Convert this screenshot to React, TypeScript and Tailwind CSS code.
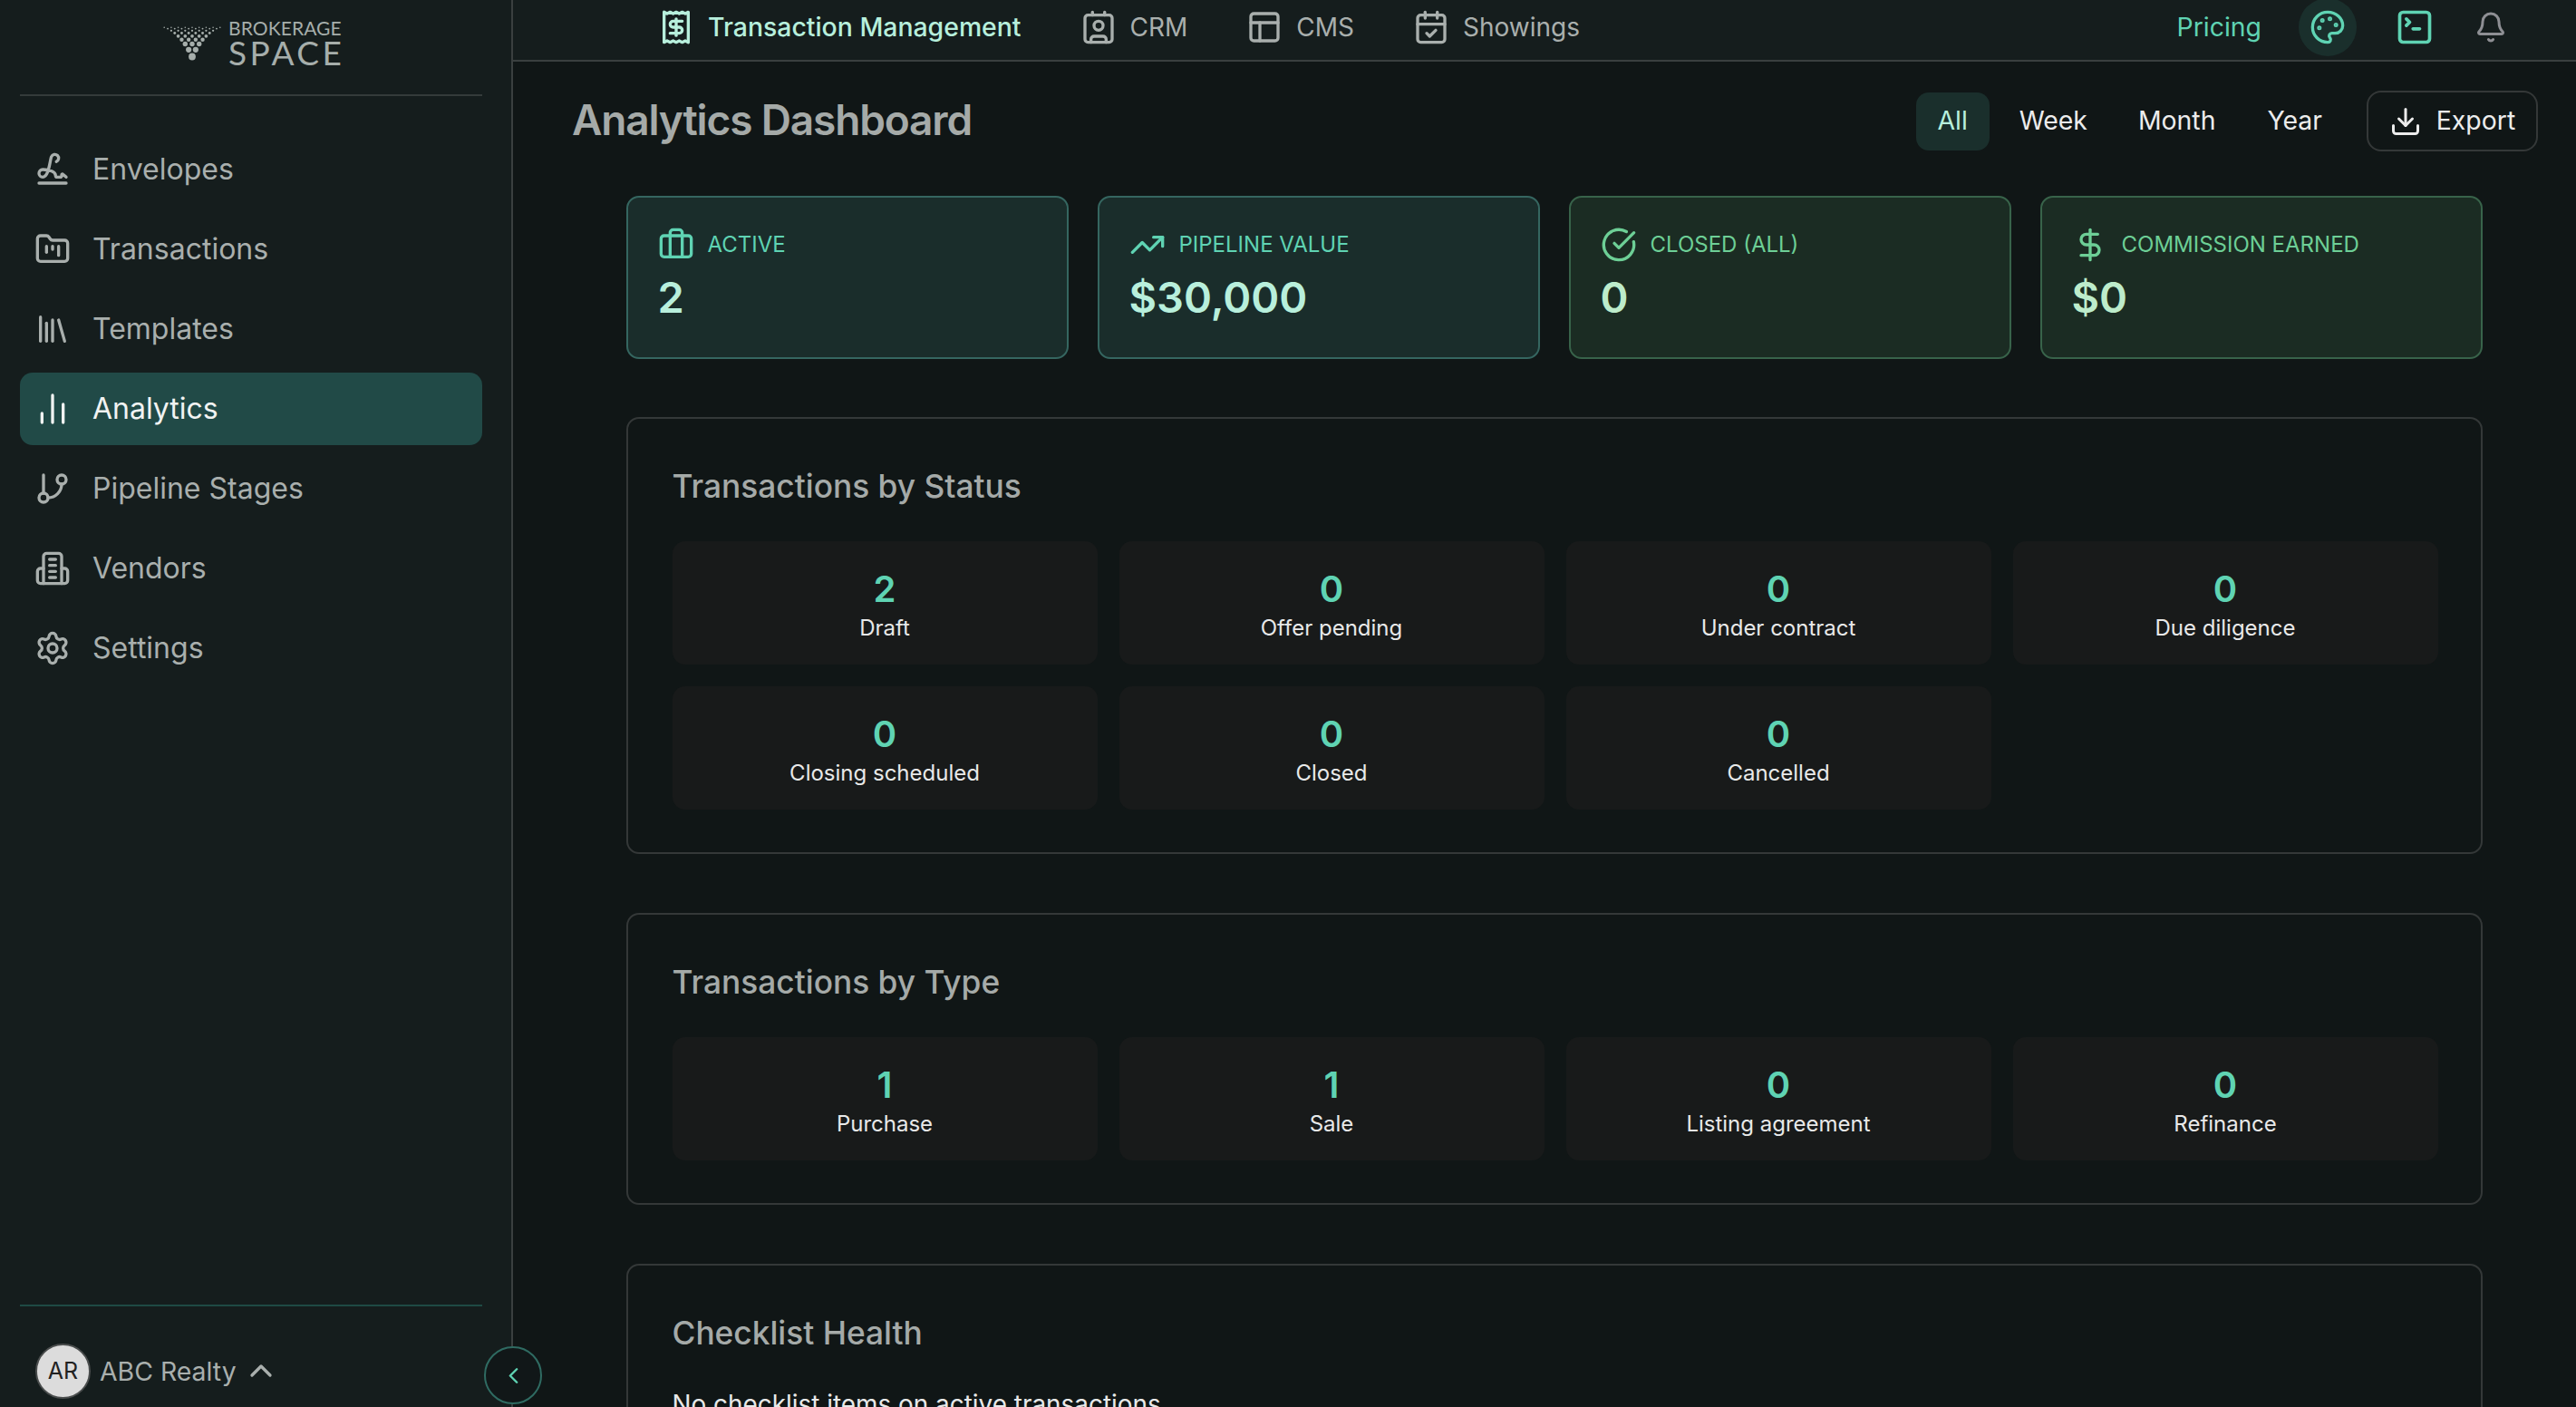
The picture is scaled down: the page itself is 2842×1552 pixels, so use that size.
import {
  Bell,
  Briefcase,
  CalendarCheck,
  ChartNoAxesColumn,
  ChevronLeft,
  ChevronUp,
  CircleCheckBig,
  Contact,
  DollarSign,
  Download,
  FolderKanban,
  GitBranch,
  Library,
  Palette,
  PanelsTopLeft,
  Receipt,
  Settings,
  Signature,
  SquareTerminal,
  TrendingUp,
  type LucideIcon
} from "lucide-react";

function VendorsIcon({size = 40}: {size?: number}) {
  return (
    <svg
      width={size}
      height={size}
      viewBox="0 0 24 24"
      fill="none"
      stroke="currentColor"
      strokeWidth={2}
      strokeLinecap="round"
      strokeLinejoin="round"
    >
      <path d="M6 22V4a2 2 0 0 1 2-2h8a2 2 0 0 1 2 2v18Z" />
      <path d="M6 12H4a2 2 0 0 0-2 2v6a2 2 0 0 0 2 2h2" />
      <path d="M18 12h2a2 2 0 0 1 2 2v6a2 2 0 0 1-2 2h-2" />
      <path d="M10 6h4" />
      <path d="M10 10h4" />
      <path d="M10 14h4" />
      <path d="M10 18h4" />
    </svg>
  );
}

// funnel of dots in the logo: triangular lattice, wide top row down to one big dot
const logoRows = [
  {y: 6.3, count: 9, r: 0.8},
  {y: 7.6, count: 8, r: 0.95},
  {y: 9.8, count: 7, r: 1.15},
  {y: 12.5, count: 6, r: 1.45},
  {y: 15.8, count: 5, r: 1.85},
  {y: 19.8, count: 4, r: 2.2},
  {y: 24.5, count: 3, r: 2.7},
  {y: 30.8, count: 2, r: 3.1},
  {y: 38.5, count: 1, r: 3.9}
];

function LogoMark() {
  return (
    <svg width="74" height="48" viewBox="0 0 74 48" fill="#a6aeab">
      {logoRows.flatMap((row) =>
        Array.from({length: row.count}, (_, index) => (
          <circle
            key={`${row.y}-${index}`}
            cx={36 + (index - (row.count - 1) / 2) * 7.7}
            cy={row.y}
            r={row.r}
          />
        ))
      )}
    </svg>
  );
}

type NavItem = {label: string; icon: LucideIcon | typeof VendorsIcon; active?: boolean};

const navItems: NavItem[] = [
  {label: "Envelopes", icon: Signature},
  {label: "Transactions", icon: FolderKanban},
  {label: "Templates", icon: Library},
  {label: "Analytics", icon: ChartNoAxesColumn, active: true},
  {label: "Pipeline Stages", icon: GitBranch},
  {label: "Vendors", icon: VendorsIcon},
  {label: "Settings", icon: Settings}
];

const topLinks = [
  {label: "CRM", icon: Contact},
  {label: "CMS", icon: PanelsTopLeft},
  {label: "Showings", icon: CalendarCheck}
];

const summaryCards = [
  {label: "Active", value: "2", icon: Briefcase, tone: "teal"},
  {label: "Pipeline Value", value: "$30,000", icon: TrendingUp, tone: "teal"},
  {label: "Closed (All)", value: "0", icon: CircleCheckBig, tone: "green"},
  {label: "Commission Earned", value: "$0", icon: DollarSign, tone: "green"}
];

const statusStats = [
  {label: "Draft", value: 2},
  {label: "Offer pending", value: 0},
  {label: "Under contract", value: 0},
  {label: "Due diligence", value: 0},
  {label: "Closing scheduled", value: 0},
  {label: "Closed", value: 0},
  {label: "Cancelled", value: 0}
];

const typeStats = [
  {label: "Purchase", value: 1},
  {label: "Sale", value: 1},
  {label: "Listing agreement", value: 0},
  {label: "Refinance", value: 0}
];

function Sidebar() {
  return (
    <aside className="relative flex h-full w-[566px] shrink-0 flex-col border-r-2 border-[#3a3f3f] bg-[#151d1d]">
      <div className="ml-[22px] mr-[32px] flex h-[106px] shrink-0 items-start justify-center gap-[2px] border-b-2 border-[#343b3a]">
        <div className="mt-[24px]">
          <LogoMark />
        </div>
        <div className="mt-[22px] flex w-[126px] flex-col text-[#a6aeab] font-['Lato',sans-serif]">
          <span className="text-[21px] leading-[18px] tracking-[0.1px]">BROKERAGE</span>
          <span className="mt-[5px] text-[37px] leading-[26px] tracking-[3.5px]">SPACE</span>
        </div>
      </div>

      <nav className="ml-[22px] mr-[32px] mt-[41px] flex flex-col gap-[8px]">
        {navItems.map((item) => {
          const Icon = item.icon;
          return (
            <div
              key={item.label}
              className={
                item.active
                  ? "flex h-[80px] items-center gap-[24px] rounded-[14px] bg-[#214a47] pl-[16px] text-[#f1f3f2]"
                  : "flex h-[80px] items-center gap-[24px] rounded-[14px] pl-[16px] text-[#a9afad]"
              }
            >
              <Icon size={40} />
              <span className="text-[32px] leading-none">{item.label}</span>
            </div>
          );
        })}
      </nav>

      <div className="ml-[22px] mr-[32px] mt-auto flex h-[113px] shrink-0 items-start border-t-2 border-[#1f4a44] pl-[17px] pt-[41px]">
        <div className="flex h-[61px] w-[61px] items-center justify-center rounded-full border-2 border-[#4a4d4d] bg-[#dcdcdc] text-[25px] text-[#222222]">
          AR
        </div>
        <span className="ml-[10px] mt-[13px] text-[28.4px] leading-[35px] text-[#a9afad]">ABC Realty</span>
        <ChevronUp size={40} className="ml-[7px] mt-[10px] text-[#a9afad]" />
      </div>

      <button className="absolute bottom-[3px] right-[-34px] flex h-[64px] w-[64px] items-center justify-center rounded-full border-2 border-[#2f6b62] bg-[#111718] text-[#5fd3b3]">
        <ChevronLeft size={29} />
      </button>
    </aside>
  );
}

function TopBar() {
  return (
    <header className="flex h-[68px] shrink-0 items-center justify-between border-b-2 border-[#3a3f3f] bg-[#151d1d] pb-[6px] pl-[160px] pr-[62px]">
      <div className="flex items-center gap-[65px]">
        <div className="flex items-center gap-[15px] text-[#b7efdc]">
          <Receipt size={40} />
          <span className="text-[28.4px] font-medium leading-none">Transaction Management</span>
        </div>
        {topLinks.map((link) => {
          const Icon = link.icon;
          return (
            <div key={link.label} className="flex items-center gap-[15px] text-[#a9afad]">
              <Icon size={40} />
              <span className="text-[28px] leading-none">{link.label}</span>
            </div>
          );
        })}
      </div>
      <div className="flex items-center">
        <span className="text-[28.4px] leading-none text-[#5fd3b3]">Pricing</span>
        <div className="ml-[41px] flex h-[64px] w-[64px] items-center justify-center rounded-full bg-[#1a2f2c] text-[#5fd3b3]">
          <Palette size={40} />
        </div>
        <div className="ml-[32px] flex h-[64px] w-[64px] items-center justify-center text-[#5fd3b3]">
          <SquareTerminal size={44} />
        </div>
        <div className="ml-[20px] flex h-[64px] w-[64px] items-center justify-center text-[#8e8f94]">
          <Bell size={36} />
        </div>
      </div>
    </header>
  );
}

function StatTile({label, value}: {label: string; value: number}) {
  return (
    <div className="flex h-[136px] flex-col items-center rounded-[14px] bg-[#181a1a] pt-[30px]">
      <span className="text-[40px] font-semibold leading-[46px] text-[#5fd3b3]">{value}</span>
      <span className="mt-[2px] text-[24px] leading-[36px] text-[#e8e9e9]">{label}</span>
    </div>
  );
}

function Section({title, stats}: {title: string; stats: {label: string; value: number}[]}) {
  return (
    <section className="rounded-[14px] border-2 border-[#343838] pb-[47px] pl-[49px] pr-[47px] pt-[48px]">
      <h2 className="text-[35.3px] font-medium leading-[54px] text-[#a5aaa8]">{title}</h2>
      <div className="mt-[33px] grid grid-cols-4 gap-[24px]">
        {stats.map((stat) => (
          <StatTile key={stat.label} label={stat.label} value={stat.value} />
        ))}
      </div>
    </section>
  );
}

export default function App() {
  return (
    <div className="flex h-[1552px] w-[2842px] overflow-hidden bg-[#101616] font-['Inter',sans-serif]">
      <Sidebar />
      <main className="flex min-w-0 flex-1 flex-col">
        <TopBar />
        <div className="flex flex-col overflow-hidden pl-[63px] pr-[42px]">
          <div className="ml-[2px] mt-[32px] flex h-[67px] shrink-0 items-center justify-between">
            <h1 className="mb-[3px] text-[46px] font-semibold leading-none tracking-[-1.15px] text-[#a5aaa8]">
              Analytics Dashboard
            </h1>
            <div className="flex items-center">
              <div className="flex h-[64px] w-[81px] items-center justify-center rounded-[14px] bg-[#1a2f2c] text-[28.4px] text-[#b7efdc]">
                All
              </div>
              <span className="ml-[33px] text-[28.4px] text-[#ececec]">Week</span>
              <span className="ml-[56px] text-[28.4px] text-[#ececec]">Month</span>
              <span className="ml-[57px] text-[28.4px] text-[#ececec]">Year</span>
              <button className="ml-[49px] flex h-[67px] w-[189px] items-center justify-center gap-[16px] rounded-[16px] border-2 border-[#343838] text-[28.4px] text-[#ececec]">
                <Download size={36} />
                Export
              </button>
            </div>
          </div>

          <div className="mx-auto w-[2048px]">
            <div className="mt-[49px] grid grid-cols-4 gap-[32px]">
              {summaryCards.map((card) => {
                const Icon = card.icon;
                const teal = card.tone === "teal";
                return (
                  <div
                    key={card.label}
                    className={
                      teal
                        ? "h-[180px] rounded-[14px] border-2 border-[#356660] bg-[#1a2d2b] pl-[33px] pt-[32px]"
                        : "h-[180px] rounded-[14px] border-2 border-[#38634a] bg-[#1b2c23] pl-[33px] pt-[32px]"
                    }
                  >
                    <div className={teal ? "flex items-center gap-[15px] text-[#5fd3b3]" : "flex items-center gap-[15px] text-[#6dcf96]"}>
                      <Icon size={40} />
                      <span className="text-[24px] uppercase leading-none">{card.label}</span>
                    </div>
                    <div
                      className={
                        teal
                          ? "mt-[8px] text-[47px] font-semibold leading-[60px] text-[#b8efdc]"
                          : "mt-[8px] text-[47px] font-semibold leading-[60px] text-[#bdeccb]"
                      }
                    >
                      {card.value}
                    </div>
                  </div>
                );
              })}
            </div>

            <div className="mt-[64px] flex flex-col gap-[65px]">
              <Section title="Transactions by Status" stats={statusStats} />
              <Section title="Transactions by Type" stats={typeStats} />
              <section className="rounded-[14px] border-2 border-[#343838] pb-[49px] pl-[49px] pr-[47px] pt-[48px]">
                <h2 className="text-[35.3px] font-medium leading-[54px] text-[#a5aaa8]">Checklist Health</h2>
                <p className="mt-[31px] text-[27.9px] leading-[40px] text-[#e8e9e9]">
                  No checklist items on active transactions.
                </p>
              </section>
            </div>
          </div>
        </div>
      </main>
    </div>
  );
}
